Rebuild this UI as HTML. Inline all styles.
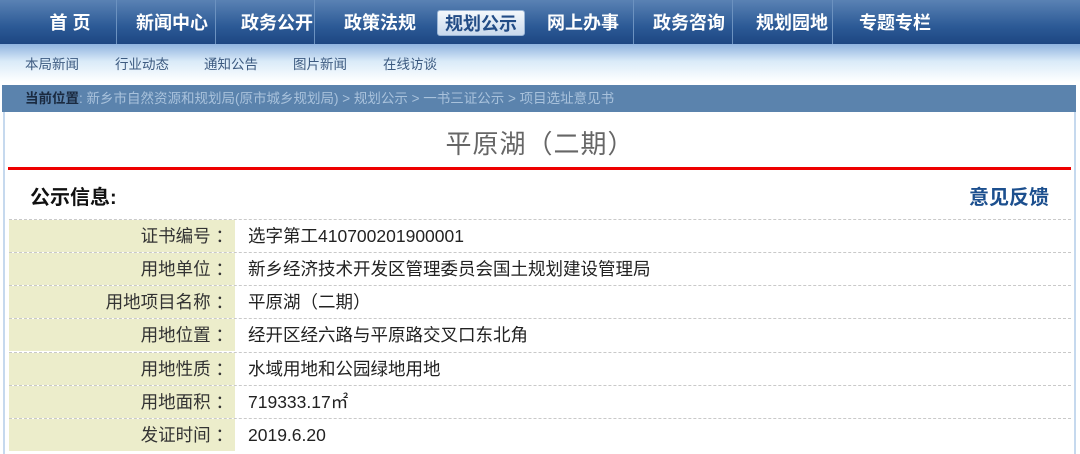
<!DOCTYPE html>
<html><head><meta charset="utf-8"><style>
*{margin:0;padding:0;box-sizing:border-box}
body{width:1080px;height:454px;overflow:hidden;background:#fff;font-family:"Liberation Sans","Noto Sans CJK SC",sans-serif;position:relative}
.nav{position:absolute;left:0;top:0;width:1080px;height:44px;background:linear-gradient(#5a82b4,#2c5a96 60%,#1d4682)}
.nav span{position:absolute;top:0;height:44px;line-height:46px;color:#fff;font-weight:bold;font-size:18px;text-align:center;width:100px}
.sep{position:absolute;top:0;width:1px;height:44px;background:#3d6aa0;border-right:1px solid #6c92c0}
.nav .act{top:10px;height:26px;line-height:27px;width:88px;background:linear-gradient(#f4f8fc,#c9d9ec);color:#224c86;border-radius:3px;border:1px solid #9ab5d6}
.sub{position:absolute;left:0;top:44px;width:1080px;height:38px;background:linear-gradient(#8fb3df,#d9eaf8 45%,#fff)}
.sub span{position:absolute;top:9px;font-size:13.5px;color:#3c5a80}
.bc{position:absolute;left:2px;top:85px;width:1074px;height:27px;background:#5b83ad;font-size:13.5px;color:#a9c2dc;line-height:28px;padding-left:23px}
.bc b{color:#1a2a40;font-weight:bold}
.box{position:absolute;left:3px;top:112px;width:1073px;height:342px;border-left:2px solid #c6d9ee;border-right:2px solid #c6d9ee}
.title{position:absolute;left:0;width:1080px;top:124px;text-align:center;font-size:26px;color:#666;letter-spacing:1px}
.red{position:absolute;left:8px;top:167px;width:1063px;height:3px;background:#e00}
.h{position:absolute;left:30px;top:181px;font-size:20px;font-weight:bold;color:#111}
.fb{position:absolute;right:31px;top:181px;font-size:20px;font-weight:bold;color:#1c4f8e}
.row{position:absolute;left:9px;width:1062px;height:33px;border-top:1px dashed #c9c9c9;font-size:17.5px;line-height:33px;color:#222}
.row .l{position:absolute;left:0;top:0;width:226px;height:32px;background:#ecedcb;text-align:right;padding-right:2px;color:#333}
.row .v{position:absolute;left:239px;top:0}
</style></head><body>
<div class="nav">
<span style="left:20px">首 页</span><div class="sep" style="left:116px"></div>
<span style="left:122px">新闻中心</span><div class="sep" style="left:215px"></div>
<span style="left:227px">政务公开</span><div class="sep" style="left:314px"></div>
<span style="left:330px">政策法规</span>
<span class="act" style="left:437px">规划公示</span>
<span style="left:533px">网上办事</span><div class="sep" style="left:633px"></div>
<span style="left:639px">政务咨询</span><div class="sep" style="left:732px"></div>
<span style="left:742px">规划园地</span><div class="sep" style="left:832px"></div>
<span style="left:845px">专题专栏</span>
</div>
<div class="sub"><span style="left:25px">本局新闻</span><span style="left:115px">行业动态</span><span style="left:204px">通知公告</span><span style="left:293px">图片新闻</span><span style="left:383px">在线访谈</span></div>
<div class="bc"><b>当前位置</b>: 新乡市自然资源和规划局(原市城乡规划局) &gt; 规划公示 &gt; 一书三证公示 &gt; 项目选址意见书</div>
<div class="box"></div>
<div class="title">平原湖（二期）</div>
<div class="red"></div>
<div class="h">公示信息:</div>
<div class="fb">意见反馈</div>
<div class="row" style="top:219px"><div class="l">证书编号 ：</div><div class="v">选字第工410700201900001</div></div>
<div class="row" style="top:252px"><div class="l">用地单位 ：</div><div class="v">新乡经济技术开发区管理委员会国土规划建设管理局</div></div>
<div class="row" style="top:285px"><div class="l">用地项目名称 ：</div><div class="v">平原湖（二期）</div></div>
<div class="row" style="top:318px"><div class="l">用地位置 ：</div><div class="v">经开区经六路与平原路交叉口东北角</div></div>
<div class="row" style="top:352px"><div class="l">用地性质 ：</div><div class="v">水域用地和公园绿地用地</div></div>
<div class="row" style="top:385px"><div class="l">用地面积 ：</div><div class="v">719333.17㎡</div></div>
<div class="row" style="top:418px;height:36px"><div class="l">发证时间 ：</div><div class="v">2019.6.20</div></div>
</body></html>
